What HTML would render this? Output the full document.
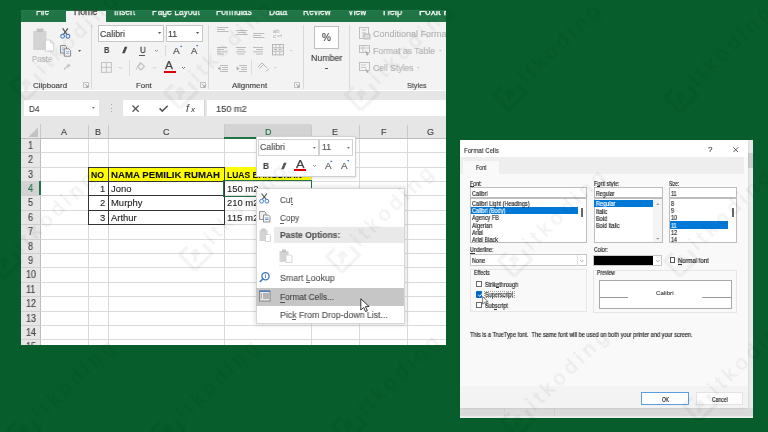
<!DOCTYPE html><html><head><meta charset="utf-8"><style>
*{margin:0;padding:0}
html,body{width:768px;height:432px;overflow:hidden;background:#075d2b;position:relative}
.a{position:absolute}
.t{position:absolute;white-space:nowrap;line-height:1;-webkit-font-smoothing:antialiased;will-change:transform;font-family:"Liberation Sans",sans-serif;transform-origin:0 0}
svg{overflow:visible}
</style></head><body><div id="w" style="position:absolute;left:0;top:0;width:768px;height:432px">
<div class="a" style="left:0;top:0;width:768px;height:432px;clip-path:inset(10px 322px 87px 21px)">
<div class="a" style="left:21.00px;top:10.00px;width:425.00px;height:335.00px;background:#fff;"></div>
<div class="a" style="left:21.00px;top:10.00px;width:425.00px;height:12.30px;background:#1f7545;"></div>
<div class="a" style="left:65.60px;top:11.00px;width:40.10px;height:11.30px;background:#f3f3f3;"></div>
<div class="a" style="left:21px;top:10px;width:425px;height:12.3px;overflow:hidden">
<div class="t" style="left:15.00px;top:-3.00px;font-size:10.00px;color:#fff;-webkit-text-stroke:0.3px #fff;transform:scaleX(0.807);">File</div>
<div class="t" style="left:53.00px;top:-3.00px;font-size:10.00px;color:#444;-webkit-text-stroke:0.3px #444;transform:scaleX(0.876);">Home</div>
<div class="t" style="left:93.20px;top:-3.00px;font-size:10.00px;color:#fff;-webkit-text-stroke:0.3px #fff;transform:scaleX(0.848);">Insert</div>
<div class="t" style="left:131.00px;top:-3.00px;font-size:10.00px;color:#fff;-webkit-text-stroke:0.3px #fff;transform:scaleX(0.848);">Page Layout</div>
<div class="t" style="left:195.00px;top:-3.00px;font-size:10.00px;color:#fff;-webkit-text-stroke:0.3px #fff;transform:scaleX(0.856);">Formulas</div>
<div class="t" style="left:247.75px;top:-3.00px;font-size:10.00px;color:#fff;-webkit-text-stroke:0.3px #fff;transform:scaleX(0.863);">Data</div>
<div class="t" style="left:282.40px;top:-3.00px;font-size:10.00px;color:#fff;-webkit-text-stroke:0.3px #fff;transform:scaleX(0.849);">Review</div>
<div class="t" style="left:327.40px;top:-3.00px;font-size:10.00px;color:#fff;-webkit-text-stroke:0.3px #fff;transform:scaleX(0.851);">View</div>
<div class="t" style="left:362.30px;top:-3.00px;font-size:10.00px;color:#fff;-webkit-text-stroke:0.3px #fff;transform:scaleX(0.925);">Help</div>
<div class="t" style="left:397.75px;top:-3.00px;font-size:10.00px;color:#fff;-webkit-text-stroke:0.3px #fff;">Foxit PDF</div>
</div>
<div class="a" style="left:21.00px;top:10.00px;width:44.60px;height:0.90px;background:#267a4b;"></div>
<div class="a" style="left:105.70px;top:10.00px;width:340.30px;height:0.90px;background:#267a4b;"></div>
<div class="a" style="left:21.00px;top:22.30px;width:425.00px;height:68.20px;background:#f3f3f3;"></div>
<div class="a" style="left:21.00px;top:90.50px;width:425.00px;height:0.80px;background:#d6d6d6;"></div>
<div class="a" style="left:91.10px;top:25.00px;width:0.80px;height:64.00px;background:#d9d9d9;"></div>
<div class="a" style="left:207.90px;top:25.00px;width:0.80px;height:64.00px;background:#d9d9d9;"></div>
<div class="a" style="left:303.10px;top:25.00px;width:0.80px;height:64.00px;background:#d9d9d9;"></div>
<div class="a" style="left:349.40px;top:25.00px;width:0.80px;height:64.00px;background:#d9d9d9;"></div>
<div class="t" style="left:32.80px;top:82.00px;font-size:7.90px;color:#444;-webkit-text-stroke:0.15px #444;transform:scaleX(1.009);">Clipboard</div>
<div class="t" style="left:135.90px;top:82.00px;font-size:7.90px;color:#444;-webkit-text-stroke:0.15px #444;">Font</div>
<div class="t" style="left:231.94px;top:82.00px;font-size:7.90px;color:#444;-webkit-text-stroke:0.15px #444;">Alignment</div>
<div class="t" style="left:407.00px;top:82.00px;font-size:7.90px;color:#444;-webkit-text-stroke:0.15px #444;transform:scaleX(0.910);">Styles</div>
<svg class="a" style="left:83.00px;top:82.00px;" width="6.00" height="6.00" viewBox="0 0 6.00 6.00"><path d="M0.5 0.5h5v5h-5z" fill="none" stroke="#b4b4b4" stroke-width="0.8"/><path d="M2 2l3 3M5 3v2h-2" fill="none" stroke="#999" stroke-width="0.8"/></svg>
<svg class="a" style="left:199.80px;top:82.00px;" width="6.00" height="6.00" viewBox="0 0 6.00 6.00"><path d="M0.5 0.5h5v5h-5z" fill="none" stroke="#b4b4b4" stroke-width="0.8"/><path d="M2 2l3 3M5 3v2h-2" fill="none" stroke="#999" stroke-width="0.8"/></svg>
<svg class="a" style="left:294.00px;top:82.00px;" width="6.00" height="6.00" viewBox="0 0 6.00 6.00"><path d="M0.5 0.5h5v5h-5z" fill="none" stroke="#b4b4b4" stroke-width="0.8"/><path d="M2 2l3 3M5 3v2h-2" fill="none" stroke="#999" stroke-width="0.8"/></svg>
<svg class="a" style="left:33.00px;top:28.00px;" width="21.00" height="24.00" viewBox="0 0 21.00 24.00"><rect x="0.2" y="3" width="13.3" height="19" fill="#d3d3d3"/><rect x="3.7" y="0.4" width="6.9" height="3.7" rx="0.8" fill="#c2c2c2"/><path d="M12.4 12h5.3l3 3v8.2h-8.3z" fill="#fff" stroke="#c6c6c6" stroke-width="0.8"/><path d="M17.7 12v3h3" fill="none" stroke="#c6c6c6" stroke-width="0.8"/></svg>
<div class="t" style="left:32.00px;top:55.00px;font-size:9.00px;color:#b9b9b9;-webkit-text-stroke:0.15px #b9b9b9;transform:scaleX(0.883);">Paste</div>
<svg class="a" style="left:60.40px;top:28.00px;" width="10.60" height="11.00" viewBox="0 0 10.60 11.00"><path d="M2.6 0.3L7.2 6.6M7.9 0.3L3.3 6.6" stroke="#555" stroke-width="1.2" fill="none"/><circle cx="2.6" cy="8.3" r="1.9" fill="none" stroke="#4a7fc0" stroke-width="1.1"/><circle cx="7.9" cy="8.3" r="1.9" fill="none" stroke="#4a7fc0" stroke-width="1.1"/></svg>
<svg class="a" style="left:60.00px;top:44.60px;" width="11.20" height="11.40" viewBox="0 0 11.20 11.40"><path d="M0.5 0.5h4.5l1.5 1.5v6h-6z" fill="#eee" stroke="#707070" stroke-width="0.8"/><path d="M4.3 3.8h4.5l1.8 1.8v5.6h-6.3z" fill="#f6f6f6" stroke="#707070" stroke-width="0.8"/><path d="M1.8 3h3M1.8 5h3M5.8 6.6h3.6M5.8 8.4h3.6" stroke="#6b9bd2" stroke-width="0.7"/></svg>
<svg class="a" style="left:77.50px;top:49.80px;" width="3.40" height="2.20" viewBox="0 0 3.40 2.20"><path d="M0 0h3.2l-1.6 2z" fill="#666"/></svg>
<svg class="a" style="left:63.30px;top:63.40px;" width="8.10" height="7.10" viewBox="0 0 8.10 7.10"><path d="M1 6.5l2.6-2.6" stroke="#c0c0c0" stroke-width="1.3" fill="none"/><path d="M3 3l2.6-2.6 2 2-2.6 2.6z" fill="#c8c8c8"/></svg>
<div class="a" style="left:98.30px;top:24.90px;width:66.00px;height:16.80px;background:#fff;border:0.8px solid #c6c6c6;box-sizing:border-box"></div>
<div class="t" style="left:100.40px;top:30.00px;font-size:8.80px;color:#444;-webkit-text-stroke:0.15px #444;">Calibri</div>
<svg class="a" style="left:157.50px;top:32.43px;" width="3.20" height="2.13" viewBox="0 0 3.20 2.13"><path d="M0 0h3.2l-1.6 1.92z" fill="#555"/></svg>
<div class="a" style="left:166.00px;top:24.90px;width:36.50px;height:16.80px;background:#fff;border:0.8px solid #c6c6c6;box-sizing:border-box"></div>
<div class="t" style="left:168.10px;top:30.00px;font-size:8.80px;color:#444;-webkit-text-stroke:0.15px #444;">11</div>
<svg class="a" style="left:196.00px;top:32.43px;" width="3.20" height="2.13" viewBox="0 0 3.20 2.13"><path d="M0 0h3.2l-1.6 1.92z" fill="#555"/></svg>
<div class="t" style="left:103.70px;top:46.00px;font-size:9.00px;color:#444;font-weight:bold;-webkit-text-stroke:0.15px #444;transform:scaleX(0.849);">B</div>
<div class="t" style="left:122.40px;top:46.00px;font-size:9.20px;color:#444;-webkit-text-stroke:0.45px #444;font-style:italic;transform:scaleX(1.941);">I</div>
<div class="t" style="left:139.50px;top:46.00px;font-size:9.00px;color:#444;-webkit-text-stroke:0.3px #444;transform:scaleX(0.895);">U</div>
<div class="a" style="left:139.30px;top:54.50px;width:6.20px;height:0.80px;background:#555;"></div>
<svg class="a" style="left:155.00px;top:50.15px;" width="3.00" height="1.50" viewBox="0 0 3.00 1.50"><path d="M0 0l1.5 1.5l1.5 -1.5" fill="none" stroke="#888" stroke-width="0.9"/></svg>
<div class="a" style="left:165.00px;top:44.90px;width:0.70px;height:10.70px;background:#d9d9d9;"></div>
<div class="t" style="left:173.20px;top:46.00px;font-size:9.40px;color:#555;-webkit-text-stroke:0.2px #555;transform:scaleX(1.080);">A</div>
<svg class="a" style="left:179.60px;top:44.80px;" width="2.40" height="2.00" viewBox="0 0 2.40 2.00"><path d="M0 2h2.4l-1.2-1.8z" fill="#3c78c4"/></svg>
<div class="t" style="left:190.80px;top:46.00px;font-size:9.40px;color:#555;-webkit-text-stroke:0.2px #555;">A</div>
<svg class="a" style="left:196.40px;top:44.80px;" width="2.40" height="2.00" viewBox="0 0 2.40 2.00"><path d="M0 0h2.4l-1.2 1.8z" fill="#3c78c4"/></svg>
<svg class="a" style="left:101.20px;top:62.00px;" width="10.80" height="10.80" viewBox="0 0 10.80 10.80"><rect x="0.5" y="0.5" width="9.8" height="9.8" fill="none" stroke="#bdbdbd" stroke-width="0.9"/><path d="M5.4 0.5v9.8M0.5 5.4h9.8" stroke="#bdbdbd" stroke-width="0.9"/></svg>
<svg class="a" style="left:118.70px;top:67.05px;" width="3.00" height="1.50" viewBox="0 0 3.00 1.50"><path d="M0 0l1.5 1.5l1.5 -1.5" fill="none" stroke="#c4c4c4" stroke-width="0.9"/></svg>
<div class="a" style="left:129.20px;top:60.00px;width:0.70px;height:16.00px;background:#dcdcdc;"></div>
<svg class="a" style="left:136.00px;top:62.00px;" width="9.00" height="9.00" viewBox="0 0 9.00 9.00"><path d="M1.5 4.5l3.5-3.5 3.5 3.5-3.5 3.5z" fill="none" stroke="#bdbdbd" stroke-width="1.1"/><path d="M4 0.3v3" stroke="#bdbdbd" stroke-width="0.9"/><path d="M0.8 5.5q-0.8 1.6 0 2.4" stroke="#c4c4c4" fill="none" stroke-width="0.9"/></svg>
<svg class="a" style="left:152.70px;top:67.05px;" width="3.00" height="1.50" viewBox="0 0 3.00 1.50"><path d="M0 0l1.5 1.5l1.5 -1.5" fill="none" stroke="#c4c4c4" stroke-width="0.9"/></svg>
<div class="t" style="left:165.30px;top:61.00px;font-size:10.00px;color:#444;-webkit-text-stroke:0.25px #444;transform:scaleX(1.179);">A</div>
<div class="a" style="left:163.90px;top:70.70px;width:12.20px;height:2.80px;background:#e00000;"></div>
<svg class="a" style="left:182.20px;top:67.05px;" width="3.00" height="1.50" viewBox="0 0 3.00 1.50"><path d="M0 0l1.5 1.5l1.5 -1.5" fill="none" stroke="#666" stroke-width="0.9"/></svg>
<svg class="a" style="left:217.40px;top:27.40px;" width="11.40" height="6.00" viewBox="0 0 11.40 6.00"><rect x="0.00" y="0.00" width="11.40" height="0.9" fill="#b5b5b5"/><rect x="0.00" y="2.00" width="8.00" height="0.9" fill="#b5b5b5"/><rect x="0.00" y="4.00" width="11.40" height="0.9" fill="#b5b5b5"/></svg>
<svg class="a" style="left:235.50px;top:30.00px;" width="11.40" height="6.00" viewBox="0 0 11.40 6.00"><rect x="0.00" y="0.00" width="11.40" height="0.9" fill="#b5b5b5"/><rect x="1.70" y="2.00" width="8.00" height="0.9" fill="#b5b5b5"/><rect x="0.00" y="4.00" width="11.40" height="0.9" fill="#b5b5b5"/></svg>
<svg class="a" style="left:253.00px;top:32.50px;" width="11.40" height="6.00" viewBox="0 0 11.40 6.00"><rect x="0.00" y="0.00" width="11.40" height="0.9" fill="#b5b5b5"/><rect x="0.00" y="2.00" width="8.00" height="0.9" fill="#b5b5b5"/><rect x="0.00" y="4.00" width="11.40" height="0.9" fill="#b5b5b5"/></svg>
<svg class="a" style="left:273.20px;top:28.00px;" width="9.80" height="10.50" viewBox="0 0 9.80 10.50"><text x="0" y="4.8" font-family="Liberation Sans" font-size="6" fill="#a8a8a8">ab</text><text x="0" y="10" font-family="Liberation Sans" font-size="6" fill="#a8a8a8">c</text><path d="M4 8h4.5v-1.5" stroke="#a8a8a8" fill="none" stroke-width="0.7"/></svg>
<svg class="a" style="left:217.40px;top:46.60px;" width="10.00" height="8.80" viewBox="0 0 10.00 8.80"><rect x="0.00" y="0.00" width="10.00" height="0.9" fill="#b5b5b5"/><rect x="0.00" y="2.20" width="7.00" height="0.9" fill="#b5b5b5"/><rect x="0.00" y="4.40" width="10.00" height="0.9" fill="#b5b5b5"/><rect x="0.00" y="6.60" width="7.00" height="0.9" fill="#b5b5b5"/></svg>
<svg class="a" style="left:235.50px;top:46.60px;" width="10.00" height="8.80" viewBox="0 0 10.00 8.80"><rect x="0.00" y="0.00" width="10.00" height="0.9" fill="#b5b5b5"/><rect x="1.50" y="2.20" width="7.00" height="0.9" fill="#b5b5b5"/><rect x="0.00" y="4.40" width="10.00" height="0.9" fill="#b5b5b5"/><rect x="1.50" y="6.60" width="7.00" height="0.9" fill="#b5b5b5"/></svg>
<svg class="a" style="left:253.00px;top:46.60px;" width="10.00" height="8.80" viewBox="0 0 10.00 8.80"><rect x="0.00" y="0.00" width="10.00" height="0.9" fill="#b5b5b5"/><rect x="3.00" y="2.20" width="7.00" height="0.9" fill="#b5b5b5"/><rect x="0.00" y="4.40" width="10.00" height="0.9" fill="#b5b5b5"/><rect x="3.00" y="6.60" width="7.00" height="0.9" fill="#b5b5b5"/></svg>
<svg class="a" style="left:271.80px;top:44.20px;" width="11.90" height="11.40" viewBox="0 0 11.90 11.40"><rect x="0.5" y="0.5" width="10.9" height="10.4" fill="none" stroke="#b0b0b0" stroke-width="0.9"/><path d="M0.5 3.8h10.9M0.5 7.3h10.9M3.9 0.5v3.3M7.8 0.5v3.3M3.9 7.3v3.6M7.8 7.3v3.6" stroke="#b0b0b0" stroke-width="0.8"/><path d="M2 5.5h3M9.5 5.5h-3" stroke="#999" stroke-width="0.8"/></svg>
<svg class="a" style="left:290.00px;top:49.63px;" width="2.60" height="1.73" viewBox="0 0 2.60 1.73"><path d="M0 0h2.6l-1.3 1.56z" fill="#c4c4c4"/></svg>
<svg class="a" style="left:217.40px;top:63.00px;" width="11.60" height="10.00" viewBox="0 0 11.60 10.00"><path d="M3 2.5h8M5 4.5h6M5 6.5h6M3 8.5h8" stroke="#b5b5b5" stroke-width="0.9"/><path d="M3.5 3.5l-2.8 2 2.8 2z" fill="#a8a8a8"/></svg>
<svg class="a" style="left:235.50px;top:63.00px;" width="11.50" height="10.00" viewBox="0 0 11.50 10.00"><path d="M3 2.5h8M5 4.5h6M5 6.5h6M3 8.5h8" stroke="#b5b5b5" stroke-width="0.9"/><path d="M0.7 3.5l2.8 2-2.8 2z" fill="#a8a8a8"/></svg>
<div class="a" style="left:251.30px;top:60.00px;width:0.70px;height:15.00px;background:#dedede;"></div>
<svg class="a" style="left:257.00px;top:62.30px;" width="12.10" height="9.40" viewBox="0 0 12.10 9.40"><path d="M1 5l4-4 5 5M2.5 6.5l3.5-3.5M9 9.5l3-3" stroke="#aaa" stroke-width="0.9" fill="none"/></svg>
<svg class="a" style="left:273.90px;top:67.13px;" width="2.60" height="1.73" viewBox="0 0 2.60 1.73"><path d="M0 0h2.6l-1.3 1.56z" fill="#c4c4c4"/></svg>
<div class="a" style="left:314.00px;top:25.80px;width:24.50px;height:22.80px;background:#fff;border:0.8px solid #bdbdbd;box-sizing:border-box"></div>
<div class="t" style="left:321.85px;top:33.00px;font-size:10.00px;color:#444;-webkit-text-stroke:0.15px #444;">%</div>
<div class="t" style="left:310.70px;top:54.00px;font-size:9.00px;color:#444;-webkit-text-stroke:0.15px #444;transform:scaleX(0.978);">Number</div>
<div class="a" style="left:325.20px;top:67.60px;width:2.60px;height:0.80px;background:#555;"></div>
<svg class="a" style="left:358.60px;top:27.00px;" width="10.70" height="12.00" viewBox="0 0 10.70 12.00"><rect x="0.5" y="0.5" width="9" height="11" fill="none" stroke="#bbb" stroke-width="0.9"/><path d="M3 3h4M3 6h4M3 9h4" stroke="#bbb"/><path d="M5 7h6v5h-6z" fill="#ddd" stroke="#aaa" stroke-width="0.7"/></svg>
<div class="t" style="left:372.70px;top:30.00px;font-size:9.00px;color:#b3b3b3;-webkit-text-stroke:0.15px #b3b3b3;">Conditional Formatting</div>
<svg class="a" style="left:358.60px;top:45.00px;" width="10.70" height="11.00" viewBox="0 0 10.70 11.00"><rect x="0.5" y="0.5" width="10" height="7" fill="none" stroke="#bbb" stroke-width="0.9"/><path d="M0.5 3h10M4 0.5v7" stroke="#bbb" stroke-width="0.8"/><path d="M6 5l4 4-2 2z" fill="#aaa"/></svg>
<div class="t" style="left:372.70px;top:47.00px;font-size:9.00px;color:#b3b3b3;-webkit-text-stroke:0.15px #b3b3b3;transform:scaleX(0.963);">Format as Table</div>
<svg class="a" style="left:438.70px;top:49.83px;" width="2.60" height="1.73" viewBox="0 0 2.60 1.73"><path d="M0 0h2.6l-1.3 1.56z" fill="#c0c0c0"/></svg>
<svg class="a" style="left:358.60px;top:62.00px;" width="10.70" height="11.00" viewBox="0 0 10.70 11.00"><rect x="0.5" y="0.5" width="10" height="8" fill="none" stroke="#bbb" stroke-width="0.9"/><path d="M2 3h5M2 5.5h5" stroke="#bbb" stroke-width="0.8"/><path d="M6 6l4 4-2 1z" fill="#aaa"/></svg>
<div class="t" style="left:372.70px;top:64.00px;font-size:9.00px;color:#b3b3b3;-webkit-text-stroke:0.15px #b3b3b3;transform:scaleX(0.952);">Cell Styles</div>
<svg class="a" style="left:416.50px;top:66.98px;" width="2.60" height="1.73" viewBox="0 0 2.60 1.73"><path d="M0 0h2.6l-1.3 1.56z" fill="#c0c0c0"/></svg>
<div class="a" style="left:21.00px;top:91.30px;width:425.00px;height:32.90px;background:#e6e6e6;"></div>
<div class="a" style="left:24.20px;top:100.00px;width:75.20px;height:16.10px;background:#fff;"></div>
<div class="t" style="left:29.00px;top:104.00px;font-size:9.40px;color:#444;-webkit-text-stroke:0.15px #444;transform:scaleX(0.873);">D4</div>
<svg class="a" style="left:91.60px;top:107.07px;" width="2.80" height="1.87" viewBox="0 0 2.80 1.87"><path d="M0 0h2.8l-1.4 1.68z" fill="#666"/></svg>
<div class="a" style="left:110.50px;top:104.00px;width:1.00px;height:1.00px;background:#a8a8a8;"></div>
<div class="a" style="left:110.50px;top:107.50px;width:1.00px;height:1.00px;background:#a8a8a8;"></div>
<div class="a" style="left:110.50px;top:111.00px;width:1.00px;height:1.00px;background:#a8a8a8;"></div>
<div class="a" style="left:122.80px;top:100.20px;width:81.50px;height:15.60px;background:#fff;"></div>
<svg class="a" style="left:132.30px;top:104.50px;" width="7.20" height="7.20" viewBox="0 0 7.20 7.20"><path d="M0.5 0.5l6.2 6.2M6.7 0.5l-6.2 6.2" stroke="#555" stroke-width="1.25"/></svg>
<svg class="a" style="left:158.80px;top:104.80px;" width="9.00" height="6.80" viewBox="0 0 9.00 6.80"><path d="M0.6 3.4l2.7 2.7 5.4-5.4" stroke="#555" stroke-width="1.5" fill="none"/></svg>
<div class="t" style="left:185.50px;top:103.00px;font-size:10.50px;color:#555;-webkit-text-stroke:0.1px #555;font-style:italic;font-family:"Liberation Serif",serif">f</div>
<div class="t" style="left:190.96px;top:106.00px;font-size:8.00px;color:#555;-webkit-text-stroke:0.1px #555;font-style:italic;font-family:"Liberation Serif",serif">x</div>
<div class="a" style="left:206.80px;top:100.20px;width:239.20px;height:15.60px;background:#fff;"></div>
<div class="a" style="left:204.20px;top:100.20px;width:0.70px;height:15.60px;background:#d4d4d4;"></div>
<div class="t" style="left:215.60px;top:104.00px;font-size:9.40px;color:#444;-webkit-text-stroke:0.15px #444;transform:scaleX(0.982);">150 m2</div>
<div class="a" style="left:21.00px;top:124.20px;width:425.00px;height:14.00px;background:#e6e6e6;"></div>
<div class="a" style="left:224.40px;top:124.20px;width:86.70px;height:14.00px;background:#d3d3d3;"></div>
<svg class="a" style="left:28.00px;top:127.00px;" width="10.50" height="10.00" viewBox="0 0 10.50 10.00"><path d="M10 0.5v9.5h-9.5z" fill="#c2c2c2"/></svg>
<div class="a" style="left:87.90px;top:125.00px;width:0.80px;height:13.20px;background:#c9c9c9;"></div>
<div class="t" style="left:61.39px;top:128.00px;font-size:9.00px;color:#444;-webkit-text-stroke:0.15px #444;">A</div>
<div class="a" style="left:107.90px;top:125.00px;width:0.80px;height:13.20px;background:#c9c9c9;"></div>
<div class="t" style="left:95.31px;top:128.00px;font-size:9.00px;color:#444;-webkit-text-stroke:0.15px #444;">B</div>
<div class="a" style="left:224.00px;top:125.00px;width:0.80px;height:13.20px;background:#c9c9c9;"></div>
<div class="t" style="left:163.11px;top:128.00px;font-size:9.00px;color:#444;-webkit-text-stroke:0.15px #444;">C</div>
<div class="a" style="left:310.70px;top:125.00px;width:0.80px;height:13.20px;background:#c9c9c9;"></div>
<div class="t" style="left:264.51px;top:128.00px;font-size:9.00px;color:#217346;-webkit-text-stroke:0.15px #217346;">D</div>
<div class="a" style="left:359.20px;top:125.00px;width:0.80px;height:13.20px;background:#c9c9c9;"></div>
<div class="t" style="left:332.36px;top:128.00px;font-size:9.00px;color:#444;-webkit-text-stroke:0.15px #444;">E</div>
<div class="a" style="left:407.00px;top:125.00px;width:0.80px;height:13.20px;background:#c9c9c9;"></div>
<div class="t" style="left:380.75px;top:128.00px;font-size:9.00px;color:#444;-webkit-text-stroke:0.15px #444;">F</div>
<div class="t" style="left:427.49px;top:128.00px;font-size:9.00px;color:#444;-webkit-text-stroke:0.15px #444;">G</div>
<div class="a" style="left:40.20px;top:124.20px;width:0.70px;height:14.00px;background:#c9c9c9;"></div>
<div class="a" style="left:21.00px;top:137.80px;width:425.00px;height:0.80px;background:#bcbcbc;"></div>
<div class="a" style="left:224.40px;top:136.80px;width:86.70px;height:1.80px;background:#217346;"></div>
<div class="a" style="left:21.00px;top:138.60px;width:19.50px;height:206.40px;background:#e6e6e6;"></div>
<div class="a" style="left:40.20px;top:138.60px;width:0.70px;height:206.40px;background:#bdbdbd;"></div>
<div class="a" style="left:21.00px;top:152.20px;width:19.50px;height:0.80px;background:#cfcfcf;"></div>
<div class="t" style="left:28.10px;top:141.00px;font-size:10.00px;color:#444;-webkit-text-stroke:0.15px #444;transform:scaleX(0.900);">1</div>
<div class="a" style="left:21.00px;top:166.60px;width:19.50px;height:0.80px;background:#cfcfcf;"></div>
<div class="t" style="left:28.10px;top:155.00px;font-size:10.00px;color:#444;-webkit-text-stroke:0.15px #444;transform:scaleX(0.900);">2</div>
<div class="a" style="left:21.00px;top:181.00px;width:19.50px;height:0.80px;background:#cfcfcf;"></div>
<div class="t" style="left:28.10px;top:170.00px;font-size:10.00px;color:#444;-webkit-text-stroke:0.15px #444;transform:scaleX(0.900);">3</div>
<div class="a" style="left:21.00px;top:181.40px;width:19.50px;height:14.40px;background:#d3d3d3;"></div>
<div class="a" style="left:39.30px;top:181.40px;width:1.70px;height:14.40px;background:#217346;"></div>
<div class="a" style="left:21.00px;top:195.40px;width:19.50px;height:0.80px;background:#cfcfcf;"></div>
<div class="t" style="left:28.10px;top:184.00px;font-size:10.00px;color:#217346;-webkit-text-stroke:0.15px #217346;transform:scaleX(0.900);">4</div>
<div class="a" style="left:21.00px;top:209.80px;width:19.50px;height:0.80px;background:#cfcfcf;"></div>
<div class="t" style="left:28.10px;top:198.00px;font-size:10.00px;color:#444;-webkit-text-stroke:0.15px #444;transform:scaleX(0.900);">5</div>
<div class="a" style="left:21.00px;top:224.20px;width:19.50px;height:0.80px;background:#cfcfcf;"></div>
<div class="t" style="left:28.10px;top:213.00px;font-size:10.00px;color:#444;-webkit-text-stroke:0.15px #444;transform:scaleX(0.900);">6</div>
<div class="a" style="left:21.00px;top:238.60px;width:19.50px;height:0.80px;background:#cfcfcf;"></div>
<div class="t" style="left:28.10px;top:227.00px;font-size:10.00px;color:#444;-webkit-text-stroke:0.15px #444;transform:scaleX(0.900);">7</div>
<div class="a" style="left:21.00px;top:253.00px;width:19.50px;height:0.80px;background:#cfcfcf;"></div>
<div class="t" style="left:28.10px;top:242.00px;font-size:10.00px;color:#444;-webkit-text-stroke:0.15px #444;transform:scaleX(0.900);">8</div>
<div class="a" style="left:21.00px;top:267.40px;width:19.50px;height:0.80px;background:#cfcfcf;"></div>
<div class="t" style="left:28.10px;top:256.00px;font-size:10.00px;color:#444;-webkit-text-stroke:0.15px #444;transform:scaleX(0.900);">9</div>
<div class="a" style="left:21.00px;top:281.80px;width:19.50px;height:0.80px;background:#cfcfcf;"></div>
<div class="t" style="left:25.61px;top:270.00px;font-size:10.00px;color:#444;-webkit-text-stroke:0.15px #444;transform:scaleX(0.900);">10</div>
<div class="a" style="left:21.00px;top:296.20px;width:19.50px;height:0.80px;background:#cfcfcf;"></div>
<div class="t" style="left:25.92px;top:285.00px;font-size:10.00px;color:#444;-webkit-text-stroke:0.15px #444;transform:scaleX(0.900);">11</div>
<div class="a" style="left:21.00px;top:310.60px;width:19.50px;height:0.80px;background:#cfcfcf;"></div>
<div class="t" style="left:25.61px;top:299.00px;font-size:10.00px;color:#444;-webkit-text-stroke:0.15px #444;transform:scaleX(0.900);">12</div>
<div class="a" style="left:21.00px;top:325.00px;width:19.50px;height:0.80px;background:#cfcfcf;"></div>
<div class="t" style="left:25.61px;top:314.00px;font-size:10.00px;color:#444;-webkit-text-stroke:0.15px #444;transform:scaleX(0.900);">13</div>
<div class="a" style="left:21.00px;top:339.40px;width:19.50px;height:0.80px;background:#cfcfcf;"></div>
<div class="t" style="left:25.61px;top:328.00px;font-size:10.00px;color:#444;-webkit-text-stroke:0.15px #444;transform:scaleX(0.900);">14</div>
<div class="a" style="left:21.00px;top:353.80px;width:19.50px;height:0.80px;background:#cfcfcf;"></div>
<div class="t" style="left:25.61px;top:342.00px;font-size:10.00px;color:#444;-webkit-text-stroke:0.15px #444;transform:scaleX(0.900);">15</div>
<div class="a" style="left:40.90px;top:152.15px;width:405.10px;height:0.90px;background:#dadada;"></div>
<div class="a" style="left:40.90px;top:166.55px;width:405.10px;height:0.90px;background:#dadada;"></div>
<div class="a" style="left:40.90px;top:180.95px;width:405.10px;height:0.90px;background:#dadada;"></div>
<div class="a" style="left:40.90px;top:195.35px;width:405.10px;height:0.90px;background:#dadada;"></div>
<div class="a" style="left:40.90px;top:209.75px;width:405.10px;height:0.90px;background:#dadada;"></div>
<div class="a" style="left:40.90px;top:224.15px;width:405.10px;height:0.90px;background:#dadada;"></div>
<div class="a" style="left:40.90px;top:238.55px;width:405.10px;height:0.90px;background:#dadada;"></div>
<div class="a" style="left:40.90px;top:252.95px;width:405.10px;height:0.90px;background:#dadada;"></div>
<div class="a" style="left:40.90px;top:267.35px;width:405.10px;height:0.90px;background:#dadada;"></div>
<div class="a" style="left:40.90px;top:281.75px;width:405.10px;height:0.90px;background:#dadada;"></div>
<div class="a" style="left:40.90px;top:296.15px;width:405.10px;height:0.90px;background:#dadada;"></div>
<div class="a" style="left:40.90px;top:310.55px;width:405.10px;height:0.90px;background:#dadada;"></div>
<div class="a" style="left:40.90px;top:324.95px;width:405.10px;height:0.90px;background:#dadada;"></div>
<div class="a" style="left:40.90px;top:339.35px;width:405.10px;height:0.90px;background:#dadada;"></div>
<div class="a" style="left:40.90px;top:353.75px;width:405.10px;height:0.90px;background:#dadada;"></div>
<div class="a" style="left:87.85px;top:138.60px;width:0.90px;height:206.40px;background:#dadada;"></div>
<div class="a" style="left:107.85px;top:138.60px;width:0.90px;height:206.40px;background:#dadada;"></div>
<div class="a" style="left:223.95px;top:138.60px;width:0.90px;height:206.40px;background:#dadada;"></div>
<div class="a" style="left:310.65px;top:138.60px;width:0.90px;height:206.40px;background:#dadada;"></div>
<div class="a" style="left:359.15px;top:138.60px;width:0.90px;height:206.40px;background:#dadada;"></div>
<div class="a" style="left:406.95px;top:138.60px;width:0.90px;height:206.40px;background:#dadada;"></div>
<div class="a" style="left:88.30px;top:167.00px;width:222.80px;height:13.60px;background:#ffff00;"></div>
<div class="a" style="left:87.80px;top:166.50px;width:137.10px;height:1.00px;background:#333;"></div>
<div class="a" style="left:87.80px;top:180.70px;width:137.10px;height:1.00px;background:#333;"></div>
<div class="a" style="left:87.80px;top:195.10px;width:137.10px;height:1.00px;background:#333;"></div>
<div class="a" style="left:87.80px;top:209.50px;width:137.10px;height:1.00px;background:#333;"></div>
<div class="a" style="left:87.80px;top:223.90px;width:137.10px;height:1.00px;background:#333;"></div>
<div class="a" style="left:87.80px;top:166.50px;width:1.00px;height:58.40px;background:#333;"></div>
<div class="a" style="left:107.80px;top:166.50px;width:1.00px;height:58.40px;background:#333;"></div>
<div class="a" style="left:223.90px;top:166.50px;width:1.00px;height:58.40px;background:#333;"></div>
<div class="t" style="left:91.20px;top:172.00px;font-size:8.20px;color:#111;font-weight:bold;-webkit-text-stroke:0.1px #111;transform:scaleX(1.057);">NO</div>
<div class="t" style="left:110.60px;top:172.00px;font-size:8.20px;color:#111;font-weight:bold;-webkit-text-stroke:0.1px #111;transform:scaleX(1.179);">NAMA PEMILIK RUMAH</div>
<div class="t" style="left:227.30px;top:171.00px;font-size:8.40px;color:#111;font-weight:bold;-webkit-text-stroke:0.1px #111;transform:scaleX(1.011);">LUAS BANGUNAN</div>
<div class="t" style="left:100.16px;top:185.00px;font-size:9.00px;color:#222;-webkit-text-stroke:0.1px #222;transform:scaleX(1.050);">1</div>
<div class="t" style="left:110.70px;top:185.00px;font-size:9.00px;color:#222;-webkit-text-stroke:0.1px #222;transform:scaleX(1.050);">Jono</div>
<div class="t" style="left:226.80px;top:185.00px;font-size:9.00px;color:#222;-webkit-text-stroke:0.1px #222;transform:scaleX(1.049);">150 m2</div>
<div class="t" style="left:100.16px;top:199.00px;font-size:9.00px;color:#222;-webkit-text-stroke:0.1px #222;transform:scaleX(1.050);">2</div>
<div class="t" style="left:110.70px;top:199.00px;font-size:9.00px;color:#222;-webkit-text-stroke:0.1px #222;transform:scaleX(1.050);">Murphy</div>
<div class="t" style="left:226.80px;top:199.00px;font-size:9.00px;color:#222;-webkit-text-stroke:0.1px #222;transform:scaleX(1.049);">210 m2</div>
<div class="t" style="left:100.16px;top:214.00px;font-size:9.00px;color:#222;-webkit-text-stroke:0.1px #222;transform:scaleX(1.050);">3</div>
<div class="t" style="left:110.70px;top:214.00px;font-size:9.00px;color:#222;-webkit-text-stroke:0.1px #222;transform:scaleX(1.050);">Arthur</div>
<div class="t" style="left:226.80px;top:214.00px;font-size:9.00px;color:#222;-webkit-text-stroke:0.1px #222;transform:scaleX(1.074);">115 m2</div>
<div class="a" style="left:223.40px;top:180.20px;width:88.70px;height:16.40px;border:1.6px solid #217346;box-sizing:border-box"></div>
</div>
<div class="a" style="left:255.50px;top:136.30px;width:100.30px;height:40.70px;background:#fff;border:0.8px solid #d0d0d0;box-sizing:border-box;box-shadow:0 1px 3px rgba(0,0,0,0.12)"></div>
<div class="a" style="left:258.30px;top:139.20px;width:61.00px;height:17.20px;background:#fff;border:0.8px solid #d2d2d2;box-sizing:border-box"></div>
<div class="t" style="left:259.70px;top:143.00px;font-size:8.80px;color:#555;-webkit-text-stroke:0.15px #555;">Calibri</div>
<svg class="a" style="left:312.50px;top:146.87px;" width="2.80" height="1.87" viewBox="0 0 2.80 1.87"><path d="M0 0h2.8l-1.4 1.68z" fill="#666"/></svg>
<div class="a" style="left:319.30px;top:139.20px;width:33.70px;height:17.20px;background:#fff;border:0.8px solid #d2d2d2;box-sizing:border-box"></div>
<div class="t" style="left:321.70px;top:143.00px;font-size:8.80px;color:#555;-webkit-text-stroke:0.15px #555;">11</div>
<svg class="a" style="left:346.70px;top:146.87px;" width="2.80" height="1.87" viewBox="0 0 2.80 1.87"><path d="M0 0h2.8l-1.4 1.68z" fill="#666"/></svg>
<div class="t" style="left:262.80px;top:162.00px;font-size:9.00px;color:#444;font-weight:bold;-webkit-text-stroke:0.15px #444;transform:scaleX(0.926);">B</div>
<div class="t" style="left:280.70px;top:161.00px;font-size:9.50px;color:#555;-webkit-text-stroke:0.45px #555;font-style:italic;transform:scaleX(1.992);">I</div>
<div class="t" style="left:295.70px;top:160.00px;font-size:10.20px;color:#444;-webkit-text-stroke:0.25px #444;transform:scaleX(1.244);">A</div>
<div class="a" style="left:293.80px;top:168.70px;width:12.30px;height:2.60px;background:#e00000;"></div>
<svg class="a" style="left:312.50px;top:164.65px;" width="3.00" height="1.50" viewBox="0 0 3.00 1.50"><path d="M0 0l1.5 1.5l1.5 -1.5" fill="none" stroke="#777" stroke-width="0.8"/></svg>
<div class="t" style="left:325.00px;top:161.00px;font-size:9.60px;color:#666;-webkit-text-stroke:0.2px #666;transform:scaleX(1.011);">A</div>
<svg class="a" style="left:330.30px;top:159.90px;" width="2.40" height="2.00" viewBox="0 0 2.40 2.00"><path d="M0 2h2.4l-1.2-1.8z" fill="#3c78c4"/></svg>
<div class="t" style="left:341.30px;top:161.00px;font-size:9.60px;color:#666;-webkit-text-stroke:0.2px #666;transform:scaleX(1.011);">A</div>
<svg class="a" style="left:347.00px;top:159.90px;" width="2.40" height="2.00" viewBox="0 0 2.40 2.00"><path d="M0 0h2.4l-1.2 1.8z" fill="#3c78c4"/></svg>
<div class="a" style="left:255.60px;top:188.40px;width:149.60px;height:136.10px;background:#fff;border:0.7px solid #d6d6d6;box-sizing:border-box;box-shadow:0 0 5px 1px rgba(0,0,0,0.13)"></div>
<svg class="a" style="left:258.70px;top:193.30px;" width="10.30" height="10.70" viewBox="0 0 10.30 10.70"><path d="M2.5 0.5L7 6.2M8 0.5L3.5 6.2" stroke="#555" stroke-width="1.1" fill="none"/><circle cx="2.6" cy="8.2" r="1.9" fill="none" stroke="#3c78c4" stroke-width="1"/><circle cx="7.9" cy="8.2" r="1.9" fill="none" stroke="#3c78c4" stroke-width="1"/></svg>
<div class="t" style="left:280.00px;top:196.00px;font-size:9.00px;color:#555;-webkit-text-stroke:0.15px #555;transform:scaleX(0.900);">Cut</div>
<div class="a" style="left:290.60px;top:204.40px;width:2.60px;height:0.70px;background:#666;"></div>
<div class="a" style="left:280.20px;top:222.60px;width:4.20px;height:0.70px;background:#666;"></div>
<svg class="a" style="left:258.50px;top:211.00px;" width="11.50" height="11.50" viewBox="0 0 11.50 11.50"><path d="M0.5 0.5h5l1.5 1.5v6.5h-6.5z" fill="#eee" stroke="#7a7a7a" stroke-width="0.8"/><path d="M4.5 4h5l1.5 1.5v5.5h-6.5z" fill="#f6f6f6" stroke="#7a7a7a" stroke-width="0.8"/><path d="M6 7h3.5M6 8.5h3.5" stroke="#3c78c4" stroke-width="0.7"/></svg>
<div class="t" style="left:280.00px;top:214.00px;font-size:9.00px;color:#555;-webkit-text-stroke:0.15px #555;transform:scaleX(0.914);">Copy</div>
<div class="a" style="left:273.80px;top:226.90px;width:130.10px;height:16.10px;background:#e9e9e9;"></div>
<svg class="a" style="left:259.00px;top:228.00px;" width="12.00" height="13.50" viewBox="0 0 12.00 13.50"><rect x="0.5" y="2" width="8" height="11" fill="#d4d4d4"/><rect x="2.5" y="0.5" width="4" height="2.5" fill="#c8c8c8"/><path d="M6.5 6.5h4l1 1v6h-5z" fill="#fff" stroke="#ccc" stroke-width="0.8"/></svg>
<div class="t" style="left:280.00px;top:231.00px;font-size:8.80px;color:#555;font-weight:bold;-webkit-text-stroke:0.15px #555;transform:scaleX(0.970);">Paste Options:</div>
<svg class="a" style="left:279.30px;top:248.60px;" width="13.30" height="13.40" viewBox="0 0 13.30 13.40"><rect x="0.5" y="2" width="9" height="11" fill="#d4d4d4"/><rect x="3" y="0.5" width="4" height="3" fill="#c4c4c4"/><path d="M7 6h5l1 1v6.5h-6z" fill="#fff" stroke="#ccc" stroke-width="0.8"/></svg>
<div class="a" style="left:279.30px;top:265.20px;width:124.70px;height:0.80px;background:#e4e4e4;"></div>
<svg class="a" style="left:258.70px;top:271.60px;" width="11.30" height="10.40" viewBox="0 0 11.30 10.40"><circle cx="6.5" cy="4.2" r="3.6" fill="none" stroke="#3c78c4" stroke-width="1.3"/><path d="M3.8 7L0.8 10" stroke="#3c78c4" stroke-width="1.6"/><path d="M6.5 3v3M6.5 1.8v0.6" stroke="#3c78c4" stroke-width="0.9"/></svg>
<div class="t" style="left:280.00px;top:274.00px;font-size:9.00px;color:#555;-webkit-text-stroke:0.15px #555;transform:scaleX(0.975);">Smart Lookup</div>
<div class="a" style="left:305.80px;top:282.20px;width:4.20px;height:0.70px;background:#666;"></div>
<div class="a" style="left:256.00px;top:288.20px;width:148.40px;height:17.50px;background:#c6c6c6;"></div>
<svg class="a" style="left:258.50px;top:290.00px;" width="12.00" height="12.00" viewBox="0 0 12.00 12.00"><rect x="0.5" y="1" width="10.5" height="10" fill="#eaeaea" stroke="#707070" stroke-width="0.8"/><path d="M0.5 1.2h10.5" stroke="#3c78c4" stroke-width="1.3"/><path d="M4 4h6M4 6h6M4 8h6M1.5 4h1.5M1.5 6h1.5M1.5 8h1.5" stroke="#666" stroke-width="0.8"/></svg>
<div class="t" style="left:280.00px;top:293.00px;font-size:9.00px;color:#444;-webkit-text-stroke:0.15px #444;transform:scaleX(0.923);">Format Cells...</div>
<div class="a" style="left:280.00px;top:301.60px;width:5.00px;height:0.70px;background:#555;"></div>
<svg class="a" style="left:359.50px;top:297.50px;" width="10.50" height="14.50" viewBox="0 0 10.50 14.50"><path d="M0.8 0.8v11.2l2.8-2.6 2 4.2 1.8-0.9-2-4.1h3.8z" fill="#fff" stroke="#222" stroke-width="0.9"/></svg>
<div class="t" style="left:280.00px;top:311.00px;font-size:9.00px;color:#555;-webkit-text-stroke:0.15px #555;transform:scaleX(0.971);">Pick From Drop-down List...</div>
<div class="a" style="left:292.00px;top:319.30px;width:4.00px;height:0.70px;background:#666;"></div>
<div class="a" style="left:459.50px;top:139.80px;width:293.10px;height:277.90px;background:#e9e9e9;"></div>
<div class="a" style="left:459.50px;top:408.20px;width:293.10px;height:8.00px;background:#dadada;"></div>
<div class="a" style="left:459.50px;top:416.20px;width:293.10px;height:1.50px;background:#ececec;"></div>
<div class="a" style="left:504.00px;top:408.20px;width:0.60px;height:7.80px;background:#cfcfcf;"></div>
<div class="a" style="left:554.00px;top:408.20px;width:0.60px;height:7.80px;background:#cfcfcf;"></div>
<div class="a" style="left:747.50px;top:152.70px;width:5.10px;height:15.70px;background:#cdcdcd;"></div>
<div class="a" style="left:460.00px;top:140.40px;width:287.80px;height:267.80px;background:#f9f9f9;box-shadow:0 0 2px rgba(0,0,0,0.15)"></div>
<div class="a" style="left:460.00px;top:140.40px;width:287.80px;height:16.90px;background:#fff;"></div>
<div class="t" style="left:464.20px;top:147.00px;font-size:7.60px;color:#333;-webkit-text-stroke:0.15px #333;transform:scaleX(0.808);">Format Cells</div>
<div class="t" style="left:708.28px;top:146.00px;font-size:8.00px;color:#444;-webkit-text-stroke:0.15px #444;">?</div>
<svg class="a" style="left:732.50px;top:146.80px;" width="5.50" height="5.50" viewBox="0 0 5.50 5.50"><path d="M0.4 0.4l4.7 4.7M5.1 0.4l-4.7 4.7" stroke="#333" stroke-width="0.8"/></svg>
<div class="a" style="left:460.00px;top:157.30px;width:284.40px;height:16.30px;background:#eeeeee;"></div>
<div class="a" style="left:463.00px;top:160.80px;width:36.40px;height:13.20px;background:#f9f9f9;"></div>
<div class="t" style="left:476.05px;top:165.00px;font-size:6.60px;color:#333;-webkit-text-stroke:0.15px #333;transform:scaleX(0.795);">Font</div>
<div class="t" style="left:470.20px;top:181.00px;font-size:6.40px;color:#222;-webkit-text-stroke:0.15px #222;transform:scaleX(0.809);">Font:</div>
<div class="t" style="left:593.60px;top:181.00px;font-size:6.40px;color:#222;-webkit-text-stroke:0.15px #222;transform:scaleX(0.863);">Font style:</div>
<div class="t" style="left:669.40px;top:181.00px;font-size:6.40px;color:#222;-webkit-text-stroke:0.15px #222;transform:scaleX(0.702);">Size:</div>
<div class="a" style="left:470.20px;top:187.40px;width:117.30px;height:11.10px;background:#fff;border:0.7px solid #bdbdbd;box-sizing:border-box"></div>
<div class="t" style="left:472.25px;top:191.00px;font-size:6.40px;color:#222;-webkit-text-stroke:0.15px #222;transform:scaleX(0.860);">Calibri</div>
<div class="a" style="left:593.50px;top:187.40px;width:69.40px;height:11.10px;background:#fff;border:0.7px solid #bdbdbd;box-sizing:border-box"></div>
<div class="t" style="left:595.80px;top:191.00px;font-size:6.40px;color:#222;-webkit-text-stroke:0.15px #222;transform:scaleX(0.826);">Regular</div>
<div class="a" style="left:669.20px;top:187.40px;width:68.30px;height:11.10px;background:#fff;border:0.7px solid #bdbdbd;box-sizing:border-box"></div>
<div class="t" style="left:671.20px;top:191.00px;font-size:6.40px;color:#222;-webkit-text-stroke:0.15px #222;transform:scaleX(0.860);">11</div>
<div class="a" style="left:470.20px;top:198.20px;width:117.30px;height:45.10px;background:#fff;border:0.7px solid #bdbdbd;box-sizing:border-box"></div>
<div class="a" style="left:470.90px;top:206.80px;width:106.80px;height:7.20px;background:#0078d7;"></div>
<div class="t" style="left:472.20px;top:201.00px;font-size:6.40px;color:#222;-webkit-text-stroke:0.15px #222;transform:scaleX(0.861);">Calibri Light (Headings)</div>
<div class="t" style="left:472.20px;top:208.00px;font-size:6.40px;color:#fff;-webkit-text-stroke:0.15px #fff;transform:scaleX(0.860);">Calibri (Body)</div>
<div class="t" style="left:472.20px;top:215.00px;font-size:6.40px;color:#222;-webkit-text-stroke:0.15px #222;transform:scaleX(0.860);">Agency FB</div>
<div class="t" style="left:472.20px;top:223.00px;font-size:6.40px;color:#222;-webkit-text-stroke:0.15px #222;transform:scaleX(0.860);">Algerian</div>
<div class="t" style="left:472.20px;top:230.00px;font-size:6.40px;color:#222;-webkit-text-stroke:0.15px #222;transform:scaleX(0.860);">Arial</div>
<div class="t" style="left:472.20px;top:237.00px;font-size:6.40px;color:#222;-webkit-text-stroke:0.15px #222;transform:scaleX(0.860);">Arial Black</div>
<div class="a" style="left:581.00px;top:208.30px;width:1.90px;height:8.40px;background:#666;"></div>
<div class="a" style="left:593.50px;top:198.20px;width:69.40px;height:44.60px;background:#fff;border:0.7px solid #bdbdbd;box-sizing:border-box"></div>
<div class="a" style="left:653.20px;top:198.90px;width:9.00px;height:43.20px;background:#f4f4f4;"></div>
<div class="a" style="left:594.20px;top:200.30px;width:59.00px;height:6.60px;background:#0078d7;"></div>
<div class="t" style="left:595.80px;top:201.00px;font-size:6.40px;color:#fff;-webkit-text-stroke:0.15px #fff;transform:scaleX(0.860);">Regular</div>
<div class="t" style="left:595.80px;top:209.00px;font-size:6.40px;color:#222;-webkit-text-stroke:0.15px #222;transform:scaleX(0.860);">Italic</div>
<div class="t" style="left:595.80px;top:216.00px;font-size:6.40px;color:#222;-webkit-text-stroke:0.15px #222;transform:scaleX(0.860);">Bold</div>
<div class="t" style="left:595.80px;top:223.00px;font-size:6.40px;color:#222;-webkit-text-stroke:0.15px #222;transform:scaleX(0.851);">Bold Italic</div>
<svg class="a" style="left:655.80px;top:203.00px;" width="3.50" height="2.00" viewBox="0 0 3.50 2.00"><path d="M0 1.8l1.75-1.6 1.75 1.6z" fill="#888"/></svg>
<svg class="a" style="left:655.80px;top:237.50px;" width="3.50" height="2.00" viewBox="0 0 3.50 2.00"><path d="M0 0l1.75 1.6 1.75-1.6z" fill="#888"/></svg>
<div class="a" style="left:669.20px;top:198.20px;width:68.30px;height:45.10px;background:#fff;border:0.7px solid #bdbdbd;box-sizing:border-box"></div>
<div class="a" style="left:669.60px;top:221.20px;width:58.30px;height:7.50px;background:#0078d7;"></div>
<div class="t" style="left:671.20px;top:201.00px;font-size:6.40px;color:#222;-webkit-text-stroke:0.15px #222;transform:scaleX(0.860);">8</div>
<div class="t" style="left:671.20px;top:208.00px;font-size:6.40px;color:#222;-webkit-text-stroke:0.15px #222;transform:scaleX(0.860);">9</div>
<div class="t" style="left:671.20px;top:215.00px;font-size:6.40px;color:#222;-webkit-text-stroke:0.15px #222;transform:scaleX(0.860);">10</div>
<div class="t" style="left:671.20px;top:223.00px;font-size:6.40px;color:#fff;-webkit-text-stroke:0.15px #fff;transform:scaleX(0.860);">11</div>
<div class="t" style="left:671.20px;top:230.00px;font-size:6.40px;color:#222;-webkit-text-stroke:0.15px #222;transform:scaleX(0.860);">12</div>
<div class="t" style="left:671.20px;top:237.00px;font-size:6.40px;color:#222;-webkit-text-stroke:0.15px #222;transform:scaleX(0.860);">14</div>
<div class="a" style="left:731.90px;top:208.30px;width:1.90px;height:9.20px;background:#666;"></div>
<div class="t" style="left:470.20px;top:247.00px;font-size:6.40px;color:#222;-webkit-text-stroke:0.15px #222;transform:scaleX(0.805);">Underline:</div>
<div class="t" style="left:593.60px;top:247.00px;font-size:6.40px;color:#222;-webkit-text-stroke:0.15px #222;transform:scaleX(0.819);">Color:</div>
<div class="a" style="left:469.90px;top:254.40px;width:117.20px;height:11.90px;background:#fff;border:0.7px solid #c8c8c8;box-sizing:border-box"></div>
<div class="t" style="left:472.00px;top:258.00px;font-size:6.40px;color:#222;-webkit-text-stroke:0.15px #222;transform:scaleX(0.860);">None</div>
<div class="a" style="left:577.00px;top:255.00px;width:0.60px;height:10.60px;background:#e2e2e2;"></div>
<svg class="a" style="left:580.25px;top:259.62px;" width="3.50" height="1.75" viewBox="0 0 3.50 1.75"><path d="M0 0l1.75 1.75l1.75 -1.75" fill="none" stroke="#999" stroke-width="0.8"/></svg>
<div class="a" style="left:593.20px;top:254.70px;width:69.10px;height:11.60px;background:#fff;border:0.7px solid #c8c8c8;box-sizing:border-box"></div>
<div class="a" style="left:594.00px;top:255.60px;width:58.70px;height:9.80px;background:#000;"></div>
<svg class="a" style="left:655.75px;top:259.62px;" width="3.50" height="1.75" viewBox="0 0 3.50 1.75"><path d="M0 0l1.75 1.75l1.75 -1.75" fill="none" stroke="#999" stroke-width="0.8"/></svg>
<div class="a" style="left:669.90px;top:257.30px;width:5.50px;height:5.80px;background:#fff;border:0.7px solid #555;box-sizing:border-box"></div>
<div class="t" style="left:677.80px;top:258.00px;font-size:6.40px;color:#222;-webkit-text-stroke:0.15px #222;transform:scaleX(0.928);">Normal font</div>
<div class="a" style="left:470.20px;top:268.90px;width:116.70px;height:42.70px;background:#f9f9f9;border:0.7px solid #e6e6e6;box-sizing:border-box"></div>
<div class="t" style="left:473.80px;top:270.00px;font-size:6.40px;color:#222;-webkit-text-stroke:0.15px #222;transform:scaleX(0.807);">Effects</div>
<div class="a" style="left:476.20px;top:281.10px;width:6.20px;height:6.40px;background:#fff;border:0.7px solid #6a6a6a;box-sizing:border-box"></div>
<div class="t" style="left:484.80px;top:282.00px;font-size:6.40px;color:#222;-webkit-text-stroke:0.15px #222;transform:scaleX(0.874);">Strikethrough</div>
<div class="a" style="left:476.20px;top:291.20px;width:6.20px;height:6.90px;background:#0067c0;border-radius:1px"></div>
<svg class="a" style="left:476.50px;top:292.00px;" width="5.50" height="5.50" viewBox="0 0 5.50 5.50"><path d="M1.2 2.7l1.5 1.7 2.6-3.1" stroke="#fff" stroke-width="0.9" fill="none"/></svg>
<div class="a" style="left:484.20px;top:290.80px;width:30.70px;height:7.70px;border:0.6px dotted #9a9a9a;box-sizing:border-box"></div>
<div class="t" style="left:485.20px;top:292.00px;font-size:6.40px;color:#222;-webkit-text-stroke:0.15px #222;transform:scaleX(0.865);">Superscript</div>
<div class="a" style="left:476.20px;top:302.10px;width:6.20px;height:6.40px;background:#fff;border:0.7px solid #6a6a6a;box-sizing:border-box"></div>
<div class="t" style="left:485.20px;top:303.00px;font-size:6.40px;color:#222;-webkit-text-stroke:0.15px #222;transform:scaleX(0.862);">Subscript</div>
<svg class="a" style="left:481.50px;top:295.80px;" width="6.50" height="9.70" viewBox="0 0 6.50 9.70"><path d="M0.6 0.6v7.4l1.9-1.7 1.3 2.8 1.2-0.6-1.3-2.7h2.5z" fill="#fff" stroke="#222" stroke-width="0.6"/></svg>
<div class="a" style="left:593.40px;top:270.00px;width:143.90px;height:42.70px;background:#f9f9f9;border:0.7px solid #e6e6e6;box-sizing:border-box"></div>
<div class="t" style="left:597.20px;top:270.00px;font-size:6.40px;color:#222;-webkit-text-stroke:0.15px #222;transform:scaleX(0.790);">Preview</div>
<div class="a" style="left:599.40px;top:279.50px;width:132.80px;height:29.60px;background:#fff;border:1.1px solid #a8a8a8;box-sizing:border-box"></div>
<div class="t" style="left:656.35px;top:290.00px;font-size:6.00px;color:#444;-webkit-text-stroke:0.15px #444;transform:scaleX(1.029);">Calibri</div>
<div class="a" style="left:599.80px;top:297.20px;width:28.40px;height:1.10px;background:#9a9a9a;"></div>
<div class="a" style="left:702.30px;top:297.20px;width:29.50px;height:1.10px;background:#9a9a9a;"></div>
<div class="t" style="left:469.90px;top:332.00px;font-size:6.40px;color:#222;-webkit-text-stroke:0.15px #222;transform:scaleX(0.882);">This is a TrueType font.&nbsp; The same font will be used on both your printer and your screen.</div>
<div class="a" style="left:460.00px;top:385.90px;width:287.80px;height:22.30px;background:#f3f3f3;"></div>
<div class="a" style="left:641.25px;top:392.00px;width:48.15px;height:12.50px;background:#fff;border:0.8px solid #5a9ee0;box-sizing:border-box"></div>
<div class="t" style="left:662.00px;top:397.00px;font-size:6.40px;color:#222;-webkit-text-stroke:0.15px #222;transform:scaleX(0.757);">OK</div>
<div class="a" style="left:696.40px;top:392.00px;width:46.90px;height:12.50px;background:#fcfcfc;border:0.7px solid #e3e3e3;box-sizing:border-box"></div>
<div class="t" style="left:712.00px;top:397.00px;font-size:6.40px;color:#222;-webkit-text-stroke:0.15px #222;transform:scaleX(0.788);">Cancel</div>
<div class="a" style="left:470.40px;top:186.40px;width:3.40px;height:0.60px;background:#333;"></div>
<div class="a" style="left:596.60px;top:186.40px;width:3.00px;height:0.60px;background:#333;"></div>
<div class="a" style="left:470.40px;top:252.80px;width:4.20px;height:0.60px;background:#333;"></div>
<div class="a" style="left:677.90px;top:263.60px;width:4.00px;height:0.60px;background:#333;"></div>
<div class="a" style="left:495.50px;top:287.30px;width:3.00px;height:0.60px;background:#333;"></div>
<div class="a" style="left:493.60px;top:308.60px;width:3.00px;height:0.60px;background:#333;"></div>
<div class="a" style="left:27px;top:84px;width:0;height:0;transform:rotate(-44deg)"><svg class="a" style="left:-15px;top:-14px" width="30" height="28" viewBox="0 0 30 28"><path d="M3 25V3h11M3 25h24V12M9 19l8-8h-6M17 11v6" fill="none" stroke="rgba(0,0,0,0.045)" stroke-width="3.6" stroke-linejoin="round"/></svg><div class="t" style="left:18px;top:-13px;font-size:21px;color:rgba(0,0,0,0.045);-webkit-text-stroke:0.7px rgba(0,0,0,0.045);letter-spacing:4.5px;-webkit-font-smoothing:antialiased">itkoding</div></div>
<div class="a" style="left:181px;top:92px;width:0;height:0;transform:rotate(-44deg)"><svg class="a" style="left:-15px;top:-14px" width="30" height="28" viewBox="0 0 30 28"><path d="M3 25V3h11M3 25h24V12M9 19l8-8h-6M17 11v6" fill="none" stroke="rgba(0,0,0,0.045)" stroke-width="3.6" stroke-linejoin="round"/></svg><div class="t" style="left:18px;top:-13px;font-size:21px;color:rgba(0,0,0,0.045);-webkit-text-stroke:0.7px rgba(0,0,0,0.045);letter-spacing:4.5px;-webkit-font-smoothing:antialiased">itkoding</div></div>
<div class="a" style="left:362px;top:94px;width:0;height:0;transform:rotate(-44deg)"><svg class="a" style="left:-15px;top:-14px" width="30" height="28" viewBox="0 0 30 28"><path d="M3 25V3h11M3 25h24V12M9 19l8-8h-6M17 11v6" fill="none" stroke="rgba(0,0,0,0.045)" stroke-width="3.6" stroke-linejoin="round"/></svg><div class="t" style="left:18px;top:-13px;font-size:21px;color:rgba(0,0,0,0.045);-webkit-text-stroke:0.7px rgba(0,0,0,0.045);letter-spacing:4.5px;-webkit-font-smoothing:antialiased">itkoding</div></div>
<div class="a" style="left:510px;top:94px;width:0;height:0;transform:rotate(-44deg)"><svg class="a" style="left:-15px;top:-14px" width="30" height="28" viewBox="0 0 30 28"><path d="M3 25V3h11M3 25h24V12M9 19l8-8h-6M17 11v6" fill="none" stroke="rgba(0,0,0,0.045)" stroke-width="3.6" stroke-linejoin="round"/></svg><div class="t" style="left:18px;top:-13px;font-size:21px;color:rgba(0,0,0,0.045);-webkit-text-stroke:0.7px rgba(0,0,0,0.045);letter-spacing:4.5px;-webkit-font-smoothing:antialiased">itkoding</div></div>
<div class="a" style="left:681px;top:96px;width:0;height:0;transform:rotate(-44deg)"><svg class="a" style="left:-15px;top:-14px" width="30" height="28" viewBox="0 0 30 28"><path d="M3 25V3h11M3 25h24V12M9 19l8-8h-6M17 11v6" fill="none" stroke="rgba(0,0,0,0.045)" stroke-width="3.6" stroke-linejoin="round"/></svg><div class="t" style="left:18px;top:-13px;font-size:21px;color:rgba(0,0,0,0.045);-webkit-text-stroke:0.7px rgba(0,0,0,0.045);letter-spacing:4.5px;-webkit-font-smoothing:antialiased">itkoding</div></div>
<div class="a" style="left:5px;top:262px;width:0;height:0;transform:rotate(-44deg)"><svg class="a" style="left:-15px;top:-14px" width="30" height="28" viewBox="0 0 30 28"><path d="M3 25V3h11M3 25h24V12M9 19l8-8h-6M17 11v6" fill="none" stroke="rgba(0,0,0,0.045)" stroke-width="3.6" stroke-linejoin="round"/></svg><div class="t" style="left:18px;top:-13px;font-size:21px;color:rgba(0,0,0,0.045);-webkit-text-stroke:0.7px rgba(0,0,0,0.045);letter-spacing:4.5px;-webkit-font-smoothing:antialiased">itkoding</div></div>
<div class="a" style="left:196px;top:254px;width:0;height:0;transform:rotate(-44deg)"><svg class="a" style="left:-15px;top:-14px" width="30" height="28" viewBox="0 0 30 28"><path d="M3 25V3h11M3 25h24V12M9 19l8-8h-6M17 11v6" fill="none" stroke="rgba(0,0,0,0.045)" stroke-width="3.6" stroke-linejoin="round"/></svg><div class="t" style="left:18px;top:-13px;font-size:21px;color:rgba(0,0,0,0.045);-webkit-text-stroke:0.7px rgba(0,0,0,0.045);letter-spacing:4.5px;-webkit-font-smoothing:antialiased">itkoding</div></div>
<div class="a" style="left:343px;top:256px;width:0;height:0;transform:rotate(-44deg)"><svg class="a" style="left:-15px;top:-14px" width="30" height="28" viewBox="0 0 30 28"><path d="M3 25V3h11M3 25h24V12M9 19l8-8h-6M17 11v6" fill="none" stroke="rgba(0,0,0,0.045)" stroke-width="3.6" stroke-linejoin="round"/></svg><div class="t" style="left:18px;top:-13px;font-size:21px;color:rgba(0,0,0,0.045);-webkit-text-stroke:0.7px rgba(0,0,0,0.045);letter-spacing:4.5px;-webkit-font-smoothing:antialiased">itkoding</div></div>
<div class="a" style="left:515px;top:260px;width:0;height:0;transform:rotate(-44deg)"><svg class="a" style="left:-15px;top:-14px" width="30" height="28" viewBox="0 0 30 28"><path d="M3 25V3h11M3 25h24V12M9 19l8-8h-6M17 11v6" fill="none" stroke="rgba(0,0,0,0.045)" stroke-width="3.6" stroke-linejoin="round"/></svg><div class="t" style="left:18px;top:-13px;font-size:21px;color:rgba(0,0,0,0.045);-webkit-text-stroke:0.7px rgba(0,0,0,0.045);letter-spacing:4.5px;-webkit-font-smoothing:antialiased">itkoding</div></div>
<div class="a" style="left:681px;top:260px;width:0;height:0;transform:rotate(-44deg)"><svg class="a" style="left:-15px;top:-14px" width="30" height="28" viewBox="0 0 30 28"><path d="M3 25V3h11M3 25h24V12M9 19l8-8h-6M17 11v6" fill="none" stroke="rgba(0,0,0,0.045)" stroke-width="3.6" stroke-linejoin="round"/></svg><div class="t" style="left:18px;top:-13px;font-size:21px;color:rgba(0,0,0,0.045);-webkit-text-stroke:0.7px rgba(0,0,0,0.045);letter-spacing:4.5px;-webkit-font-smoothing:antialiased">itkoding</div></div>
<div class="a" style="left:24px;top:430px;width:0;height:0;transform:rotate(-44deg)"><svg class="a" style="left:-15px;top:-14px" width="30" height="28" viewBox="0 0 30 28"><path d="M3 25V3h11M3 25h24V12M9 19l8-8h-6M17 11v6" fill="none" stroke="rgba(0,0,0,0.045)" stroke-width="3.6" stroke-linejoin="round"/></svg><div class="t" style="left:18px;top:-13px;font-size:21px;color:rgba(0,0,0,0.045);-webkit-text-stroke:0.7px rgba(0,0,0,0.045);letter-spacing:4.5px;-webkit-font-smoothing:antialiased">itkoding</div></div>
<div class="a" style="left:168px;top:430px;width:0;height:0;transform:rotate(-44deg)"><svg class="a" style="left:-15px;top:-14px" width="30" height="28" viewBox="0 0 30 28"><path d="M3 25V3h11M3 25h24V12M9 19l8-8h-6M17 11v6" fill="none" stroke="rgba(0,0,0,0.045)" stroke-width="3.6" stroke-linejoin="round"/></svg><div class="t" style="left:18px;top:-13px;font-size:21px;color:rgba(0,0,0,0.045);-webkit-text-stroke:0.7px rgba(0,0,0,0.045);letter-spacing:4.5px;-webkit-font-smoothing:antialiased">itkoding</div></div>
<div class="a" style="left:349px;top:425px;width:0;height:0;transform:rotate(-44deg)"><svg class="a" style="left:-15px;top:-14px" width="30" height="28" viewBox="0 0 30 28"><path d="M3 25V3h11M3 25h24V12M9 19l8-8h-6M17 11v6" fill="none" stroke="rgba(0,0,0,0.045)" stroke-width="3.6" stroke-linejoin="round"/></svg><div class="t" style="left:18px;top:-13px;font-size:21px;color:rgba(0,0,0,0.045);-webkit-text-stroke:0.7px rgba(0,0,0,0.045);letter-spacing:4.5px;-webkit-font-smoothing:antialiased">itkoding</div></div>
<div class="a" style="left:518px;top:420px;width:0;height:0;transform:rotate(-44deg)"><svg class="a" style="left:-15px;top:-14px" width="30" height="28" viewBox="0 0 30 28"><path d="M3 25V3h11M3 25h24V12M9 19l8-8h-6M17 11v6" fill="none" stroke="rgba(0,0,0,0.045)" stroke-width="3.6" stroke-linejoin="round"/></svg><div class="t" style="left:18px;top:-13px;font-size:21px;color:rgba(0,0,0,0.045);-webkit-text-stroke:0.7px rgba(0,0,0,0.045);letter-spacing:4.5px;-webkit-font-smoothing:antialiased">itkoding</div></div>
<div class="a" style="left:700px;top:405px;width:0;height:0;transform:rotate(-44deg)"><svg class="a" style="left:-15px;top:-14px" width="30" height="28" viewBox="0 0 30 28"><path d="M3 25V3h11M3 25h24V12M9 19l8-8h-6M17 11v6" fill="none" stroke="rgba(0,0,0,0.045)" stroke-width="3.6" stroke-linejoin="round"/></svg><div class="t" style="left:18px;top:-13px;font-size:21px;color:rgba(0,0,0,0.045);-webkit-text-stroke:0.7px rgba(0,0,0,0.045);letter-spacing:4.5px;-webkit-font-smoothing:antialiased">itkoding</div></div>
</div></body></html>
